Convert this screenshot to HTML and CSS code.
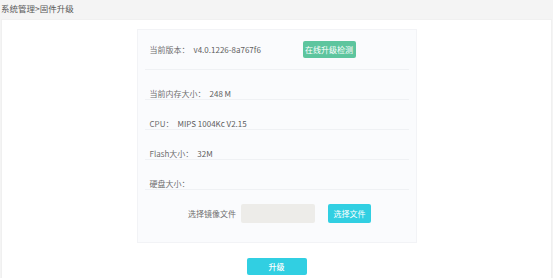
FILE: index.html
```html
<!DOCTYPE html>
<html lang="zh-CN">
<head>
  <meta charset="UTF-8">
  <meta name="viewport" content="width=device-width, initial-scale=1.0">
  <title>固件升级</title>
  <link rel="stylesheet" href="styles.css">
</head>
<body>
    <div class="crumb">系统管理&gt;固件升级</div>
    <div class="panel">
        <div class="card">
            <div class="row row-version">
                <span class="label">当前版本：</span>
                <span class="value version">v4.0.1226-8a767f6</span>
                <button class="btn btn-green">在线升级检测</button>
            </div>
            <div class="row">
                <span class="label">当前内存大小：</span>
                <span class="value">248 M</span>
            </div>
            <div class="row">
                <span class="label">CPU：</span>
                <span class="value">MIPS 1004Kc V2.15</span>
            </div>
            <div class="row">
                <span class="label">Flash大小：</span>
                <span class="value">32M</span>
            </div>
            <div class="row">
                <span class="label">硬盘大小：</span>
            </div>
            <div class="file-row">
                <span class="file-label">选择镜像文件</span>
                <div class="file-box"></div>
                <button class="btn btn-cyan btn-file">选择文件</button>
            </div>
        </div>
        <div class="actions">
            <button class="btn btn-cyan btn-upgrade">升级</button>
        </div>
    </div>
</body>
</html>
```

FILE: styles.css
```css
* {
    margin: 0;
    padding: 0;
    box-sizing: border-box;
    font-family: "Noto Sans CJK SC", "Noto Sans", sans-serif;
}
body {
    background-color: #f4f4f4;
    height: 100vh;
    display: flex;
    flex-direction: column;
    color: #6a6a6a;
    font-size: 8px;
}
.crumb {
    height: 19px;
    line-height: 16px;
    padding-left: 1px;
    font-size: 8.5px;
    color: #5a5a5a;
}
.panel {
    flex: 1;
    margin: 0 1px 0 1px;
    background: #fff;
    border: 1px solid #f0f0f0;
    border-bottom: none;
    padding-top: 9px;
}
.card {
    width: 280px;
    margin: 0 auto;
    background: #fafbfd;
    border: 1px solid #f2f3f6;
    padding: 0 7px;
}
.row {
    display: flex;
    align-items: flex-end;
    height: 30px;
    padding-left: 5px;
    border-bottom: 1px solid #eff1f4;
    line-height: 10px;
}
.row-version {
    height: 40px;
    align-items: center;
}
.label {
    color: #6e6e6e;
}
.value {
    margin-left: 4px;
    color: #5e5e5e;
}
.version {
    width: 109px;
}
.btn {
    border: none;
    border-radius: 2px;
    color: #fff;
    font-size: 8px;
    cursor: pointer;
}
.btn-green {
    width: 53px;
    height: 17px;
    background-color: #5dc59e;
}
.btn-cyan {
    background-color: #31cfe2;
}
.file-row {
    display: flex;
    align-items: center;
    justify-content: center;
    padding: 14px 0 19px 6px;
}
.file-label {
    color: #6e6e6e;
}
.file-box {
    width: 74px;
    height: 19px;
    margin-left: 5px;
    background-color: #edece9;
    border-radius: 2px;
}
.btn-file {
    width: 43px;
    height: 19px;
    margin-left: 13px;
}
.actions {
    display: flex;
    justify-content: center;
    padding-top: 15px;
}
.btn-upgrade {
    width: 60px;
    height: 17px;
    font-weight: 500;
}
```
